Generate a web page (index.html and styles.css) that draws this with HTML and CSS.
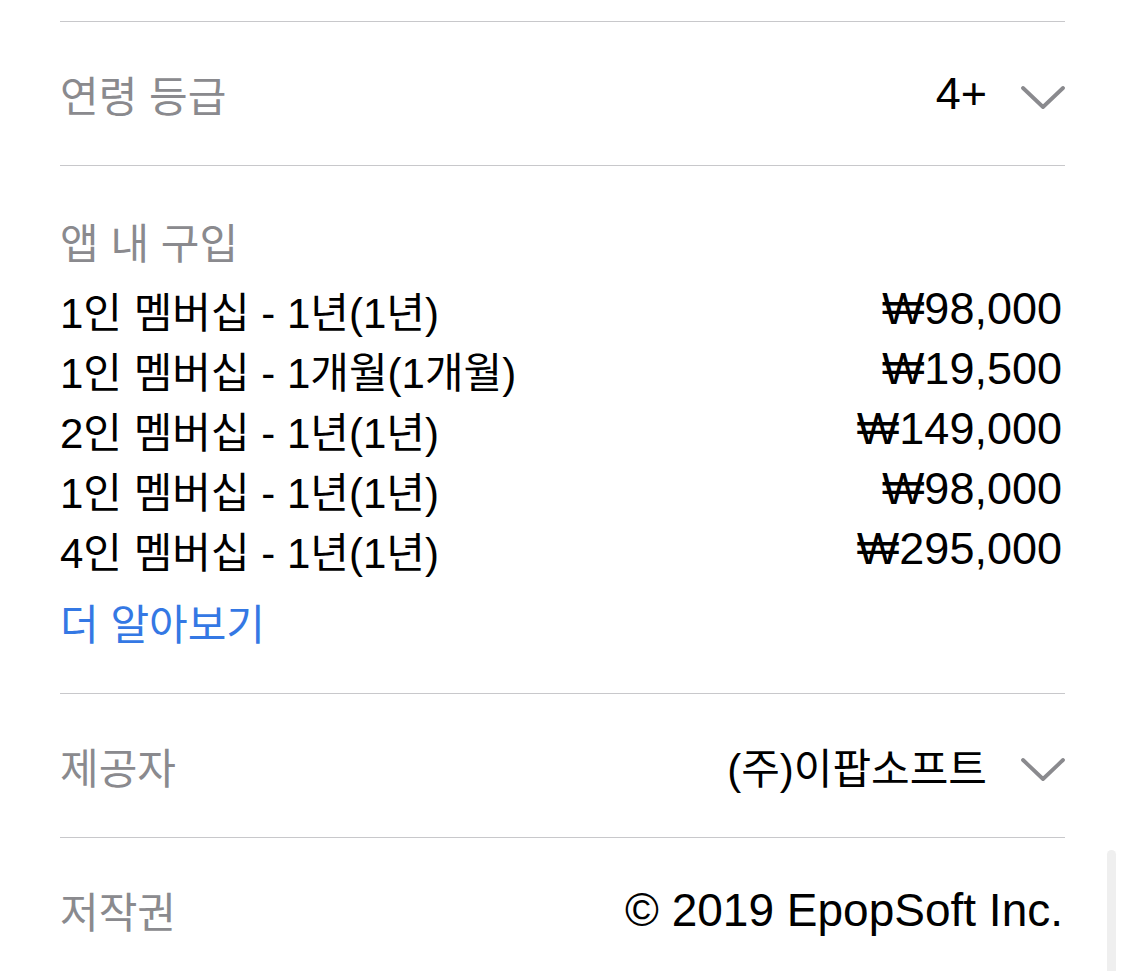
FILE: index.html
```html
<!DOCTYPE html>
<html lang="ko">
<head>
  <meta charset="UTF-8" />
  <title>정보</title>
  <meta name="viewport" content="width=device-width, initial-scale=1" />
  <link rel="stylesheet" href="styles.css">
</head>
<body>
  <main class="info">
    <div class="info-row">
      <span class="info-label">연령 등급</span>
      <span class="info-value">
        <span class="latin">4+</span>
        <svg class="chevron" viewBox="0 0 44 24" width="44" height="24"><polyline points="2,2 22,21 42,2" /></svg>
      </span>
    </div>

    <section class="info-block">
      <div class="info-label">앱 내 구입</div>
      <ul class="iap-list">
        <li><span>1인 멤버십 - 1년(1년)</span><span class="latin">₩98,000</span></li>
        <li><span>1인 멤버십 - 1개월(1개월)</span><span class="latin">₩19,500</span></li>
        <li><span>2인 멤버십 - 1년(1년)</span><span class="latin">₩149,000</span></li>
        <li><span>1인 멤버십 - 1년(1년)</span><span class="latin">₩98,000</span></li>
        <li><span>4인 멤버십 - 1년(1년)</span><span class="latin">₩295,000</span></li>
      </ul>
      <a class="more-link" href="#">더 알아보기</a>
    </section>

    <div class="info-row">
      <span class="info-label">제공자</span>
      <span class="info-value">
        <span class="ko">(주)이팝소프트</span>
        <svg class="chevron" viewBox="0 0 44 24" width="44" height="24"><polyline points="2,2 22,21 42,2" /></svg>
      </span>
    </div>

    <div class="info-row">
      <span class="info-label">저작권</span>
      <span class="info-value"><span class="latin copyright">© 2019 EpopSoft Inc.</span></span>
    </div>
  </main>
  <div class="scroll-indicator"></div>
</body>
</html>
```

FILE: styles.css
```css
body {
  margin: 0;
  background: #fff;
  font-family: "Liberation Sans", "Noto Sans CJK KR", sans-serif;
  color: #000;
  overflow: hidden;
}
.info {
  padding: 21px 60px 0 60px;
}
.info-row {
  border-top: 1px solid #c8c8cb;
  height: 143px;
  display: flex;
  justify-content: space-between;
  align-items: center;
}
.info-label {
  font-family: "Noto Sans CJK KR", sans-serif;
  font-size: 42px;
  color: #8a8a8e;
  line-height: 60px;
}
.info-value {
  display: flex;
  align-items: center;
  gap: 34px;
}
.latin {
  font-family: "Liberation Sans", "Noto Sans CJK KR", sans-serif;
  font-size: 45px;
}
.copyright {
  font-size: 46px;
  margin-right: 2px;
}
.ko {
  font-family: "Liberation Sans", "Noto Sans CJK KR", sans-serif;
  font-size: 42px;
}
.chevron {
  margin-top: 8px;
  display: block;
}
.chevron polyline {
  fill: none;
  stroke: #8a8a8e;
  stroke-width: 3.8;
  stroke-linecap: round;
  stroke-linejoin: round;
}
.info-block {
  border-top: 1px solid #c8c8cb;
  padding: 45px 0 41px 0;
}
.iap-list {
  list-style: none;
  margin: 8px 0 13px 0;
  padding: 0;
}
.iap-list li {
  display: flex;
  justify-content: space-between;
  align-items: center;
  height: 60px;
  font-size: 42px;
}
.iap-list li .latin {
  margin-right: 3px;
}
.more-link {
  display: block;
  font-family: "Noto Sans CJK KR", sans-serif;
  font-size: 42px;
  line-height: 60px;
  color: #3478e4;
  text-decoration: none;
}
.scroll-indicator {
  position: absolute;
  left: 1107px;
  top: 850px;
  width: 9px;
  height: 140px;
  border-radius: 5px;
  background: #efefef;
}
```
